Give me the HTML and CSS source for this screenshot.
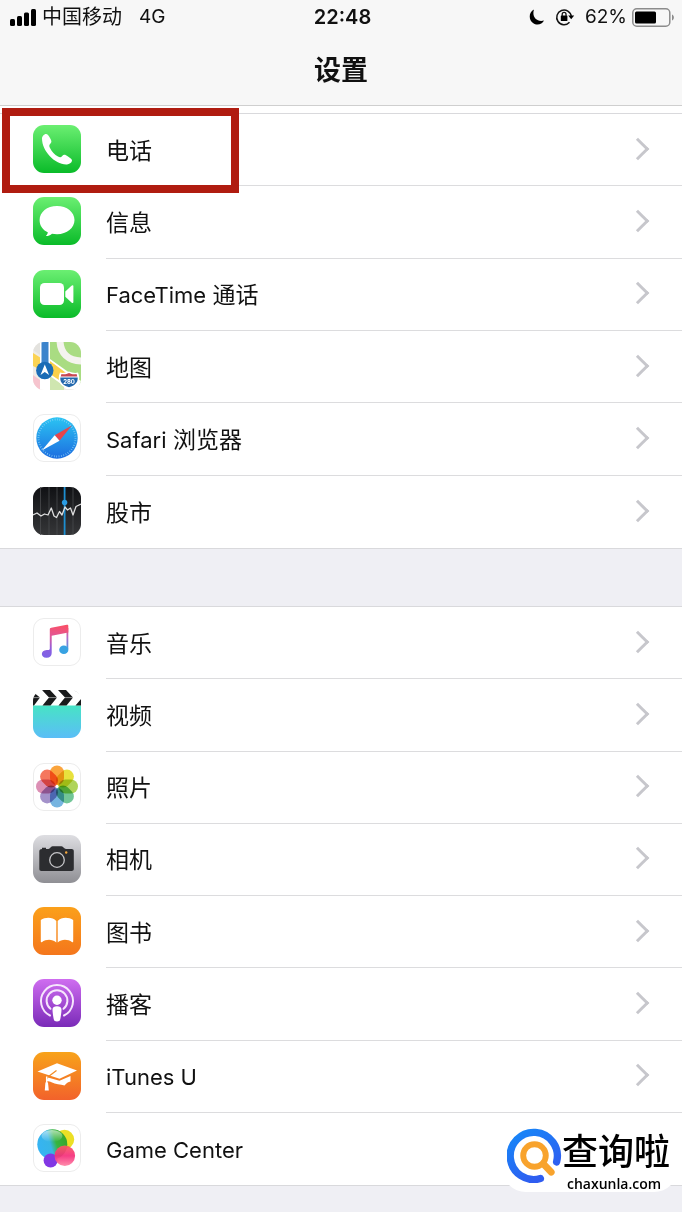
FILE: index.html
```
<!DOCTYPE html>
<html lang="zh-CN">
<head>
<meta charset="UTF-8">
<meta name="viewport" content="width=device-width, initial-scale=1">
<title>设置</title>
<link rel="stylesheet" href="styles.css">
</head>
<body>
<header class="header">
	<div class="status-bar">
		<div class="status-left">
			<svg class="signal" viewBox="0 0 27 17"><rect y="10" width="5" height="7" rx="1.5"/><rect x="7" y="7" width="5" height="10" rx="1.5"/><rect x="14" y="3.5" width="5" height="13.5" rx="1.5"/><rect x="21" y="0" width="5" height="17" rx="1.5"/></svg>
			<span>中国移动</span>
			<span class="network">4G</span>
		</div>
		<div class="status-time">22:48</div>
		<div class="status-right">
			<svg class="moon" viewBox="0 0 16 16"><path d="M5 .5C-.5 3-.5 11 4 14c4 3 9 1.500 11-2.500C8 13.500 2.500 8 5 .5z"/></svg>
			<svg class="lock" viewBox="0 0 20 18"><path d="M14.500 14.200A7.300 7.300 0 1 1 16.300 8.500" fill="none" stroke="#111" stroke-width="1.5"/><path d="M13.200 7.500h6l-3 3.800z"/><rect x="5.800" y="7.500" width="6.600" height="5.500" rx=".6"/><path d="M7.200 8V6.300a1.900 1.900 0 0 1 3.800 0V8" fill="none" stroke="#111" stroke-width="1.300"/></svg>
			<span class="percent">62%</span>
			<svg class="battery" viewBox="0 0 43 19"><rect x=".8" y=".8" width="37" height="17.400" rx="4" fill="none" stroke="#8c8c8c" stroke-width="1.5"/><rect x="3" y="3.5" width="21" height="12" rx="1.5"/><path d="M40 6.500c2.500 1 2.500 5 0 6z" fill="#8c8c8c"/></svg>
		</div>
	</div>
	<h1 class="title">设置</h1>
</header>

<main>
	<ul class="group group-first">
		<li class="row row-marked">
			<a href="#">
				<svg class="icon" viewBox="0 0 48 48"><defs><linearGradient id="green" x2="0" y2="1"><stop offset="0" stop-color="#6bef72"/><stop offset="1" stop-color="#0abb29"/></linearGradient></defs><rect width="48" height="48" rx="11" fill="url(#green)"/><path d="M9 13.500c0-2 2-4.500 4-4.500 1.500 0 2.500 1.500 4 4s2 4 .5 5.500c-1.500 1.300-1.500 2.500-.5 4.500 2 4 4.500 6.500 8 8.500 1.800 1 3 1 4.200-.5 1.500-1.700 3-1.500 5.800.5 2.500 1.700 4.300 2.800 4 4.200-.4 2-2.800 3.500-5 3.700C22 40 9 26 9 13.500z" fill="#fff"/></svg>
				<div class="label"><span>电话</span></div>
			</a>
		</li>
		<li class="row">
			<a href="#">
				<svg class="icon" viewBox="0 0 48 48"><rect width="48" height="48" rx="11" fill="url(#green)"/><path d="M24 9c10 0 17.500 6.200 17.500 14S34 37.200 24 37.200c-1.800 0-3.400-.2-5-.5-1.600 1.400-3.800 2.300-6.200 2.400 1-1 1.800-2.200 2-3.800C9.600 33 6.600 28.500 6.600 23 6.600 15.200 14 9 24 9z" fill="#fff"/></svg>
				<div class="label"><span>信息</span></div>
			</a>
		</li>
		<li class="row">
			<a href="#">
				<svg class="icon" viewBox="0 0 48 48"><rect width="48" height="48" rx="11" fill="url(#green)"/><rect x="7" y="13" width="24" height="22" rx="4.5" fill="#fff"/><path d="M32.300 21.500l6.200-5.800c1-.9 1.900-.6 1.900.8v15.200c0 1.400-.9 1.700-1.900.8l-6.200-5.800z" fill="#fff"/></svg>
				<div class="label"><span><span class="latin">FaceTime</span> 通话</span></div>
			</a>
		</li>
		<li class="row">
			<a href="#">
				<svg class="icon" viewBox="0 0 48 48">
					<defs><clipPath id="tile"><rect width="48" height="48" rx="11"/></clipPath></defs>
					<g clip-path="url(#tile)">
						<rect width="48" height="48" fill="#efece6"/>
						<path d="M17 0h31v44L17 18z" fill="#a9dc82"/>
						<path d="M0 11l8 5v12L0 24z" fill="#fbd353"/>
						<path d="M0 0h7v13L0 8z" fill="#e3e2de"/>
						<path d="M0 33l7 5v10H0z" fill="#f6c4ce"/>
						<path d="M17 17l31 22v8H33L17 34z" fill="#fff"/>
						<path d="M17 19l23 17-8 6-15-10z" fill="#fbd04a"/>
						<path d="M17 34l14 10v4H17z" fill="#cfe6b0"/>
						<path d="M27-2c0 13 8 21 23 21" fill="none" stroke="#f4f3ef" stroke-width="7"/>
						<rect x="7" width="10" height="48" fill="#fff"/>
						<rect x="8.5" width="7" height="27" fill="#3c84cc"/>
						<circle cx="11.800" cy="28.500" r="8.700" fill="#1b6cb6"/>
						<path d="M11.800 22.500l4.300 10.500-4.300-3-4.300 3z" fill="#fff"/>
						<path d="M27 30.500c3 1 6 0 9-1 3 1 6 2 9 1 3 7 1 14-9 16-10-2-12-9-9-16z" fill="#fff"/>
						<path d="M28.500 32c3 .8 5 0 7.500-1 2.500 1 4.500 1.800 7.500 1l.8 2.500H27.700z" fill="#c94752"/>
						<path d="M27.300 35.500h17.400c.3 5-2.700 8-8.700 9.700-6-1.700-9-4.700-8.700-9.700z" fill="#2268ad"/>
						<text x="36" y="41.500" class="shield-text">280</text>
					</g>
				</svg>
				<div class="label"><span>地图</span></div>
			</a>
		</li>
		<li class="row">
			<a href="#">
				<svg class="icon" viewBox="0 0 48 48"><defs><linearGradient id="compass" x2="0" y2="1"><stop offset="0" stop-color="#2bc4f3"/><stop offset="1" stop-color="#1d6de0"/></linearGradient></defs><rect class="tile" x=".5" y=".5" width="47" height="47" rx="10.500"/><circle cx="24" cy="24" r="20.700" fill="url(#compass)"/><circle cx="24" cy="24" r="18.500" fill="none" stroke="#8fd4f8" stroke-width="2" stroke-dasharray=".6 1.810"/><path d="M38.800 11.500L21.700 21.300l4.800 5.400z" fill="#e8444b"/><path d="M8.800 36.500l12.900-15.200 4.800 5.400z" fill="#fff"/></svg>
				<div class="label"><span><span class="latin">Safari</span> 浏览器</span></div>
			</a>
		</li>
		<li class="row">
			<a href="#">
				<svg class="icon" viewBox="0 0 48 48"><defs><linearGradient id="dark" x2="0" y2="1"><stop offset="0" stop-color="#101114"/><stop offset="1" stop-color="#353638"/></linearGradient></defs><rect width="48" height="48" rx="11" fill="url(#dark)"/><path d="M7.500 0v48M16 0v48M24 0v48M40 0v48" stroke="#4a4b4e" stroke-width=".8"/><path d="M31.600 0v48" stroke="#1d8ed0" stroke-width="1.800"/><path d="M0 28l4-2 4 3 3.500-2 3.500 1 3.300-7 2.700 8 2.500 1.500 3-6 2.500 3.500 3-8 2.500 3 3-2 2.500 7 3-8.500L48 17" fill="none" stroke="#dedede" stroke-width="1.300" stroke-linejoin="round"/><circle cx="31.600" cy="15.500" r="2.700" fill="#2a9be2"/></svg>
				<div class="label"><span>股市</span></div>
			</a>
		</li>
	</ul>

	<ul class="group">
		<li class="row">
			<a href="#">
				<svg class="icon" viewBox="0 0 48 48"><defs><linearGradient id="note" gradientUnits="userSpaceOnUse" x1="26" y1="8" x2="22" y2="40"><stop offset="0" stop-color="#f8506a"/><stop offset=".35" stop-color="#e0579a"/><stop offset=".75" stop-color="#8c5ee0"/><stop offset="1" stop-color="#7d62e6"/></linearGradient><linearGradient id="noteRight" gradientUnits="userSpaceOnUse" x1="0" y1="8" x2="0" y2="34"><stop offset="0" stop-color="#f8506a"/><stop offset=".45" stop-color="#b36bcb"/><stop offset="1" stop-color="#2fa4e4"/></linearGradient></defs><rect class="tile" x=".5" y=".5" width="47" height="47" rx="10.500"/><path d="M33.500 10h1.800v21h-1.800z" fill="url(#noteRight)"/><ellipse cx="30.800" cy="31.800" rx="4.600" ry="4.300" fill="#38a2e2"/><path d="M16.800 11.500c0-1 .4-1.500 1.500-1.700l15.500-3c1-.2 1.500.2 1.500 1.200v6.500l-16.600 3.200V35c0 3-2 4.600-5 4.800-6.400.3-6.500-7.400 0-7.700 1.600-.1 3.100 0 3.100-1.400z" fill="url(#note)"/></svg>
				<div class="label"><span>音乐</span></div>
			</a>
		</li>
		<li class="row">
			<a href="#">
				<svg class="icon" viewBox="0 0 48 48"><defs><linearGradient id="video" x2="0" y2="1"><stop offset="0" stop-color="#47e3c5"/><stop offset="1" stop-color="#5bbdf8"/></linearGradient></defs><g clip-path="url(#tile)"><rect width="48" height="48" fill="#fff"/><rect y="15.500" width="48" height="33" fill="url(#video)"/><path d="M0 2l7 5.500-6 8H0zM9 0h8l7 7.500-6.500 8H9.500l6.500-8zM25 0h8l7 7.500-6.500 8h-8l6.500-8zM41 0h7v5zM48 9v6.500h-5.500z" fill="#191a1b"/><path d="M0 7.600h48" stroke="#fff" stroke-width=".5"/></g></svg>
				<div class="label"><span>视频</span></div>
			</a>
		</li>
		<li class="row">
			<a href="#">
				<svg class="icon" viewBox="0 0 48 48"><rect class="tile" x=".5" y=".5" width="47" height="47" rx="10.500"/><g class="petals" transform="translate(24 23.500)"><rect x="-7" y="-21" width="14" height="19.500" rx="7" fill="#fa9a28"/><rect x="-7" y="-21" width="14" height="19.500" rx="7" fill="#e6de28" transform="rotate(45)"/><rect x="-7" y="-21" width="14" height="19.500" rx="7" fill="#a8d048" transform="rotate(90)"/><rect x="-7" y="-21" width="14" height="19.500" rx="7" fill="#62c08c" transform="rotate(135)"/><rect x="-7" y="-21" width="14" height="19.500" rx="7" fill="#67acdd" transform="rotate(180)"/><rect x="-7" y="-21" width="14" height="19.500" rx="7" fill="#9a86c4" transform="rotate(225)"/><rect x="-7" y="-21" width="14" height="19.500" rx="7" fill="#d984ad" transform="rotate(270)"/><rect x="-7" y="-21" width="14" height="19.500" rx="7" fill="#f4684c" transform="rotate(315)"/></g></svg>
				<div class="label"><span>照片</span></div>
			</a>
		</li>
		<li class="row">
			<a href="#">
				<svg class="icon" viewBox="0 0 48 48"><defs><linearGradient id="silver" x2="0" y2="1"><stop offset="0" stop-color="#dedee2"/><stop offset="1" stop-color="#8f8f94"/></linearGradient></defs><rect width="48" height="48" rx="11" fill="url(#silver)"/><path d="M9 14v-1.300h4V14h2.500c1.500 0 2-2.800 4-2.800h9c2 0 2.500 2.800 4.500 2.800h5.500c1.500 0 2.300.8 2.300 2.200v17.600c0 1.400-.8 2.200-2.300 2.200h-30c-1.500 0-2.200-.8-2.200-2.200V16.200C6.300 14.800 7.500 14 9 14z" fill="#2c2d30"/><circle cx="24" cy="25" r="7.300" fill="#292a2c" stroke="#c5c5c8" stroke-width="1.300"/><circle cx="33.200" cy="17.500" r="1.200" fill="#f5a83c"/></svg>
				<div class="label"><span>相机</span></div>
			</a>
		</li>
		<li class="row">
			<a href="#">
				<svg class="icon" viewBox="0 0 48 48"><defs><linearGradient id="orange" x2="0" y2="1"><stop offset="0" stop-color="#fba01a"/><stop offset="1" stop-color="#f4761c"/></linearGradient></defs><rect width="48" height="48" rx="11" fill="url(#orange)"/><path d="M23.300 14v21.500c-4-3.500-10-3.500-14.500-.3-.5.300-1 0-1-.6V13c4.500-3 12-3 15.500 1zM24.700 14v21.500c4-3.500 10-3.500 14.500-.3.500.3 1 0 1-.6V13c-4.500-3-12-3-15.500 1z" fill="#fff"/></svg>
				<div class="label"><span>图书</span></div>
			</a>
		</li>
		<li class="row">
			<a href="#">
				<svg class="icon" viewBox="0 0 48 48"><defs><linearGradient id="purple" x2="0" y2="1"><stop offset="0" stop-color="#cf6df0"/><stop offset="1" stop-color="#7a2bb8"/></linearGradient></defs><rect width="48" height="48" rx="11" fill="url(#purple)"/><g fill="none" stroke="#f6e6fc" stroke-width="2" stroke-linecap="round"><path d="M17 36.500a16 16 0 1 1 14 0"/><path d="M17.500 29.800a10.400 10.400 0 1 1 13 0"/></g><circle cx="24" cy="21.300" r="4.700" fill="#fff"/><path d="M19.500 30.500c0-2.500 2-3.300 4.500-3.300s4.500.8 4.500 3.300c0 3-.8 7.500-1.200 9.500-.3 1.800-1.500 2.500-3.300 2.500s-3-.7-3.300-2.500c-.4-2-1.200-6.500-1.200-9.500z" fill="#fff"/></svg>
				<div class="label"><span>播客</span></div>
			</a>
		</li>
		<li class="row">
			<a href="#">
				<svg class="icon" viewBox="0 0 48 48"><defs><linearGradient id="sunset" x2="0" y2="1"><stop offset="0" stop-color="#f8a31a"/><stop offset="1" stop-color="#f2622b"/></linearGradient></defs><rect width="48" height="48" rx="11" fill="url(#sunset)"/><path d="M4.500 19.500L24 11.200l20 7.300-17.500 8.300z" fill="#fff"/><path d="M15 25.500l11.500 3.300 11-4.800v5.500c-2.500.5-4 1.500-6 4-4-1.300-9-1-13-3.200-1.500-.8-2.500-1-5-1.200z" fill="#fff"/><path d="M23.500 18.500l-10 7.500" fill="none" stroke="#f28a22" stroke-width="1.200"/><path d="M13.700 24.500v7" stroke="#fff" stroke-width="1.5"/><path d="M12.400 30.500h2.600l.8 8h-4z" fill="#fff"/></svg>
				<div class="label"><span class="latin">iTunes U</span></div>
			</a>
		</li>
		<li class="row">
			<a href="#">
				<svg class="icon" viewBox="0 0 48 48"><defs><linearGradient id="bubble" x1="0" y1=".7" x2="1" y2=".4"><stop offset="0" stop-color="#35b4f5"/><stop offset=".45" stop-color="#38b5e6"/><stop offset=".65" stop-color="#37b540"/><stop offset="1" stop-color="#37a52c"/></linearGradient><linearGradient id="shine" x2="0" y2="1"><stop offset="0" stop-color="#fff" stop-opacity=".6"/><stop offset="1" stop-color="#fff" stop-opacity="0"/></linearGradient><linearGradient id="pink" x2="0" y2="1"><stop offset="0" stop-color="#fb5a62"/><stop offset=".5" stop-color="#f52f7c"/><stop offset="1" stop-color="#ff86a6"/></linearGradient></defs><rect class="tile" x=".5" y=".5" width="47" height="47" rx="10.500"/><circle cx="31.500" cy="15.500" r="9.700" fill="#ecdf25"/><circle cx="19.300" cy="20.300" r="15" fill="url(#bubble)"/><ellipse cx="19" cy="12" rx="10.500" ry="6" fill="url(#shine)"/><circle cx="17.600" cy="36.500" r="7" fill="#8237e4"/><circle cx="31.800" cy="31.800" r="10.300" fill="url(#pink)" fill-opacity=".93"/></svg>
				<div class="label"><span class="latin">Game Center</span></div>
			</a>
		</li>
	</ul>
</main>

<div class="watermark">
	<svg class="watermark-logo" viewBox="0 0 56 56"><defs><linearGradient id="ring" x1="0" y1="0" x2=".6" y2="1"><stop offset="0" stop-color="#1688f8"/><stop offset="1" stop-color="#2f5cf0"/></linearGradient></defs><path d="M34 51.500A24 24 0 1 1 50.500 34.500" fill="none" stroke="url(#ring)" stroke-width="7.500" stroke-linecap="round"/><circle cx="28" cy="28" r="11.500" fill="none" stroke="#f8a32d" stroke-width="6"/><path d="M37 36.500l8 8.500" stroke="#f8a32d" stroke-width="7" stroke-linecap="round"/></svg>
	<div class="watermark-text">
		<strong>查询啦</strong>
		<span>chaxunla.com</span>
	</div>
</div>
</body>
</html>
```
FILE: styles.css
```
*,
*::after{box-sizing: border-box;}
body{
	margin: 0;
	position: relative;
	min-height: 100vh;
	background: #efeff4;
	color: #111;
	font-family: Inter, "Noto Sans CJK SC", sans-serif;
	overflow-x: hidden;
}
svg{
	display: block;
	flex: none;
}
.header{
	height: 106px;
	background: #f7f7f7;
	border-bottom: 1px solid #cfcfcf;
}
.status-bar{
	display: grid;
	grid-template-columns: 1fr auto 1fr;
	align-items: center;
	height: 34px;
	padding: 0 7px 0 10px;
	font-size: 20px;
	line-height: 34px;
}
.status-left,
.status-right{
	display: flex;
	align-items: center;
}
.status-right{
	justify-content: flex-end;
}
.signal{
	width: 27px;
	height: 17px;
	margin-right: 5px;
}
.network{
	margin-left: 17px;
	font-size: 19px;
}
.status-time{
	font-weight: 600;
}
.moon{
	width: 16px;
	height: 16px;
	margin-right: 10px;
}
.lock{
	width: 20px;
	height: 18px;
	margin-right: 10px;
}
.percent{
	font-size: 19px;
}
.battery{
	width: 43px;
	height: 19px;
	margin-left: 5px;
}
.title{
	margin: 0;
	font-size: 27px;
	font-weight: 600;
	line-height: 74px;
	text-align: center;
}
main{
	padding-top: 7px;
	background: linear-gradient(#fff 7px, transparent 7px);
}
.group{
	display: grid;
	grid-auto-rows: 1fr;
	min-height: 580px;
	margin: 57px 0 0;
	padding: 0;
	list-style: none;
	background: #fff;
	border-top: 1px solid #d9d9dc;
	border-bottom: 1px solid #d9d9dc;
}
.group-first{
	min-height: 436px;
	margin-top: 0;
}
.row{
	position: relative;
}
.row a{
	display: flex;
	height: 100%;
	align-items: center;
	gap: 25px;
	padding-left: 33px;
	color: inherit;
	text-decoration: none;
}
.icon{
	width: 48px;
	height: 48px;
	margin-bottom: 2px;
}
.label{
	display: flex;
	flex: 1;
	align-self: stretch;
	align-items: center;
	justify-content: space-between;
	padding: 2px 36px 0 0;
	border-bottom: 1px solid #dcdcde;
	font-size: 23px;
	line-height: 32px;
}
.label::after{
	content: '';
	width: 16px;
	height: 16px;
	margin-bottom: 4px;
	border-top: 3px solid #c7c7cc;
	border-right: 3px solid #c7c7cc;
	transform: rotate(45deg);
}
.latin{
	font-size: 22px;
}
.row:last-child .label{
	border-bottom: 0;
}
/* 红框标记 */
.row-marked::after{
	content: '';
	position: absolute;
	top: -6px;
	left: 2px;
	width: 237px;
	height: 85px;
	border: 8px solid #b01c10;
	pointer-events: none;
	z-index: 1;
}
.tile{
	fill: #fff;
	stroke: #ececec;
}
.petals rect{
	mix-blend-mode: multiply;
	opacity: .9;
}
.shield-text{
	fill: #fff;
	font-size: 6px;
	font-weight: 700;
	text-anchor: middle;
}
/* 水印 */
.watermark{
	position: absolute;
	right: 4px;
	bottom: 20px;
	display: flex;
	align-items: flex-start;
	padding: 0 8px 0 5px;
	background: #fff;
	border-radius: 24px;
	color: #000;
}
.watermark-logo{
	width: 55px;
	height: 55px;
}
.watermark-text{
	display: flex;
	flex-direction: column;
}
.watermark-text strong{
	font-size: 36px;
	font-weight: 500;
	line-height: 48px;
}
.watermark-text span{
	padding-left: 5px;
	font-family: "Open Sans", sans-serif;
	font-size: 14px;
	font-weight: 600;
	line-height: 16px;
}
```
